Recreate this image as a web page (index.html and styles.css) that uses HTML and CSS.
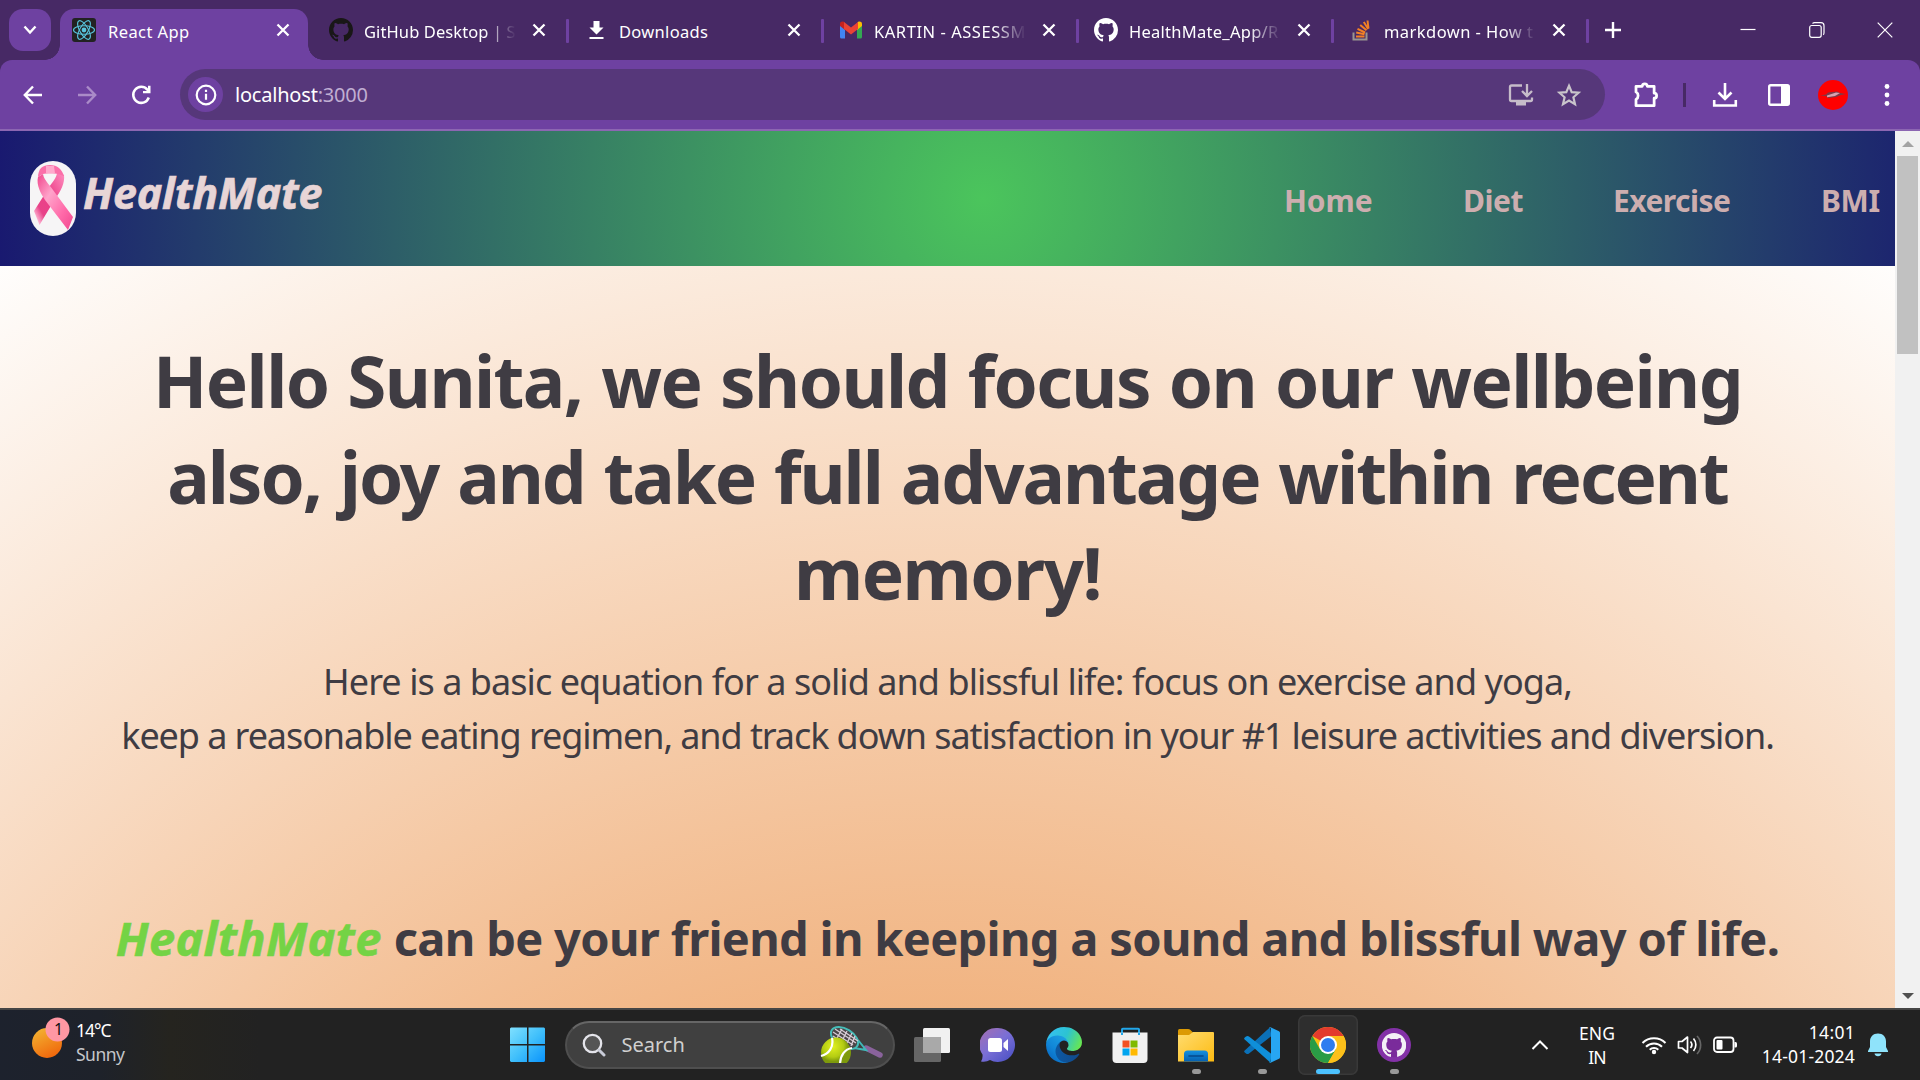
FILE: index.html
```html
<!DOCTYPE html>
<html lang="en">
<head>
<meta charset="utf-8">
<title>React App</title>
<link rel="stylesheet" href="styles.css">
</head>
<body>
<svg class="defs" width="0" height="0" aria-hidden="true">
  <symbol id="x" viewBox="0 0 14 14"><path d="M1.5 1.5l11 11M12.5 1.5l-11 11" stroke="#fff" stroke-width="2.3" fill="none"/></symbol>
  <symbol id="octocat" viewBox="0 0 16 16"><path d="M8 0C3.58 0 0 3.58 0 8c0 3.54 2.29 6.53 5.47 7.59.4.07.55-.17.55-.38 0-.19-.01-.82-.01-1.49-2.01.37-2.53-.49-2.69-.94-.09-.23-.48-.94-.82-1.13-.28-.15-.68-.52-.01-.53.63-.01 1.08.58 1.23.82.72 1.21 1.87.87 2.33.66.07-.52.28-.87.51-1.07-1.78-.2-3.64-.89-3.64-3.95 0-.87.31-1.59.82-2.15-.08-.2-.36-1.02.08-2.12 0 0 .67-.21 2.2.82.64-.18 1.32-.27 2-.27s1.36.09 2 .27c1.53-1.04 2.2-.82 2.2-.82.44 1.1.16 1.92.08 2.12.51.56.82 1.27.82 2.15 0 3.07-1.87 3.75-3.65 3.95.29.25.54.73.54 1.48 0 1.07-.01 1.93-.01 2.2 0 .21.15.46.55.38A8.01 8.01 0 0 0 16 8c0-4.42-3.58-8-8-8z"/></symbol>
</svg>

<header class="tabstrip">
  <button class="tab-search"><svg width="14" height="10" viewBox="0 0 14 10"><path d="M1.5 1.5L7 7.5l5.500-6" fill="none" stroke="#fff" stroke-width="2.4"/></svg></button>
  <div class="tab active">
    <svg class="fav" width="24" height="24" viewBox="0 0 24 24"><rect width="24" height="24" rx="3" fill="#222"/><g fill="none" stroke="#58c4dc" stroke-width="1.1"><ellipse cx="12" cy="12" rx="10.500" ry="4.200"/><ellipse cx="12" cy="12" rx="10.500" ry="4.200" transform="rotate(60 12 12)"/><ellipse cx="12" cy="12" rx="10.500" ry="4.200" transform="rotate(120 12 12)"/></g><circle cx="12" cy="12" r="2.400" fill="#58c4dc"/></svg>
    <span class="title"><span class="t-react">React App</span></span>
    <svg class="close" width="14" height="14"><use href="#x"/></svg>
  </div>
  <div class="tab first">
    <svg class="fav" width="24" height="24" fill="#191717"><use href="#octocat"/></svg>
    <span class="title fade"><span class="t-gh">GitHub Desktop | S</span></span>
    <svg class="close" width="14" height="14"><use href="#x"/></svg>
  </div>
  <div class="tab">
    <svg class="fav" width="24" height="24" viewBox="0 0 24 24"><path d="M9.500 3h6v6.500h4L12.500 16.500 5.500 9.500h4zM5.500 19h14v2h-14z" fill="#fff"/></svg>
    <span class="title"><span class="t-dl">Downloads</span></span>
    <svg class="close" width="14" height="14"><use href="#x"/></svg>
  </div>
  <div class="tab">
    <svg class="fav" width="24" height="24" viewBox="0 0 24 24"><path d="M1 6.500V19a1.500 1.500 0 0 0 1.500 1.500H6V10z" fill="#4285f4"/><path d="M23 6.500V19a1.500 1.500 0 0 1-1.500 1.500H18V10z" fill="#34a853"/><path d="M18 5.500V12l5-4V6c0-2.500-2.700-3-4-2z" fill="#fbbc04"/><path d="M6 5.500V12L1 8V6c0-2.500 2.700-3 4-2z" fill="#c5221f"/><path d="M5 4l7 5.500L19 4v7l-7 5.500L5 11z" fill="#ea4335"/></svg>
    <span class="title fade"><span class="t-mail">KARTIN - ASSESSM</span></span>
    <svg class="close" width="14" height="14"><use href="#x"/></svg>
  </div>
  <div class="tab">
    <svg class="fav" width="24" height="24" fill="#fff"><use href="#octocat"/></svg>
    <span class="title fade"><span class="t-repo">HealthMate_App/R</span></span>
    <svg class="close" width="14" height="14"><use href="#x"/></svg>
  </div>
  <div class="tab">
    <svg class="fav" width="24" height="24" viewBox="0 0 24 24"><path d="M4.500 14.500v7h13v-7" fill="none" stroke="#9a9590" stroke-width="2"/><g stroke="#f48024" stroke-width="2"><path d="M7 18.500h8.500M7.200 14.600l8.300 1.700M8.500 10.800l7.600 3.700M11.200 7l6.300 5.300M14.800 4l4.400 7M18.500 2.500l1 8"/></g></svg>
    <span class="title fade"><span class="t-so">markdown - How t</span></span>
    <svg class="close" width="14" height="14"><use href="#x"/></svg>
  </div>
  <svg class="newtab" width="16" height="16" viewBox="0 0 16 16"><path d="M8 0v16M0 8h16" stroke="#fff" stroke-width="2.400"/></svg>
  <div class="winctl">
    <svg width="16" height="16" viewBox="0 0 16 16"><path d="M.5 7.500h15" stroke="#fff" stroke-width="1.200"/></svg>
    <svg width="16" height="16" viewBox="0 0 16 16"><g fill="none" stroke="#fff" stroke-width="1.200"><rect x=".7" y="3.500" width="11.500" height="11.800" rx="2"/><path d="M3.500 1.500Q4.500.7 5.500.7H12q3 0 3 3v7q0 1.500-.8 2"/></g></svg>
    <svg width="16" height="16" viewBox="0 0 16 16"><path d="M.7.700l14.600 14.600M15.300.700L.7 15.300" stroke="#fff" stroke-width="1.200"/></svg>
  </div>
</header>

<div class="toolbar-wrap">
<div class="toolbar">
  <div class="navbtns">
    <svg width="22" height="22" viewBox="0 0 22 22"><path d="M20 11H3M11 2.500L2.800 11l8.200 8.500" fill="none" stroke="#fff" stroke-width="2.400"/></svg>
    <svg width="22" height="22" viewBox="0 0 22 22"><path d="M2 11h17M11 2.500l8.200 8.500-8.200 8.500" fill="none" stroke="#aa8bc8" stroke-width="2.400"/></svg>
    <svg width="22" height="22" viewBox="0 0 22 22"><path d="M18.800 13.500A8 8 0 1 1 17.300 5.600L19 7.800" fill="none" stroke="#fff" stroke-width="2.500"/><path d="M20.500 1.800v7.500H13V7h5V1.800z" fill="#fff"/></svg>
  </div>
  <div class="omnibox">
    <span class="info"><svg width="22" height="22" viewBox="0 0 22 22"><circle cx="11" cy="11" r="9.300" fill="none" stroke="#fff" stroke-width="2.200"/><path d="M11 9.800v6M11 5.800v2.300" stroke="#fff" stroke-width="2.200"/></svg></span>
    <span class="url">localhost<i>:3000</i></span>
    <svg class="install" width="26" height="24" viewBox="0 0 26 24"><path d="M14 2.500H3.500q-1.500 0-1.500 1.500v12.500q0 1.500 1.500 1.500h19q1.500 0 1.500-1.500V14.500M19 1v11M14 8l5 5 5-5" fill="none" stroke="#c6bcc9" stroke-width="2.300"/><path d="M8 18h10v4.500H8z" fill="#c6bcc9"/></svg>
    <svg width="26" height="26" viewBox="0 0 26 26"><path d="M13 3.800l2.700 6.300 6.900.6-5.200 4.600 1.600 6.800-6-3.600-6 3.600 1.600-6.800-5.200-4.600 6.900-.6z" fill="none" stroke="#c9c4cb" stroke-width="2.200"/></svg>
  </div>
  <div class="tools">
    <svg width="30" height="30" viewBox="0 0 24 24"><path d="M4 5H9a2 2 0 0 1 4 0H18.500V10.500a2 2 0 0 1 0 4V20.500H4V15.500a3.500 3.500 0 0 0 0-6Z" fill="none" stroke="#fff" stroke-width="2.200" stroke-linejoin="round"/></svg>
    <span class="tsep"></span>
    <svg class="dl" width="26" height="26" viewBox="0 0 26 26"><path d="M13 1v15M6.500 10.500L13 17l6.500-6.500M2.200 18v5.500h21.600V18" fill="none" stroke="#fff" stroke-width="2.600"/></svg>
    <svg class="panel" width="24" height="24" viewBox="0 0 24 24"><rect x="2.200" y="2.200" width="19.600" height="19.600" rx="1.500" fill="none" stroke="#fff" stroke-width="2.400"/><path d="M14 2h8v20h-8z" fill="#fff"/></svg>
    <svg class="avatar" width="30" height="30" viewBox="0 0 30 30"><circle cx="15" cy="15" r="15" fill="#fe0000"/><path d="M2 15.500l6-1 2-2 9-1 3 1.500 6 1-5 1-5 2-8 1-2-2z" fill="#7c3a48"/><path d="M9 15.500l9-3 4 .5-5 3-8 1.200z" fill="#d9a0ae"/></svg>
    <svg class="more" width="6" height="26" viewBox="0 0 6 26"><g fill="#fff"><circle cx="3" cy="4.500" r="2.400"/><circle cx="3" cy="13" r="2.400"/><circle cx="3" cy="21.500" r="2.400"/></g></svg>
  </div>
</div>
</div>

<div class="viewport">
  <div class="page">
    <nav class="nav">
      <svg class="ribbon" width="46" height="75" viewBox="0 0 46 75">
        <defs>
          <linearGradient id="pk" x1="0" y1="0" x2="1" y2="1"><stop offset="0" stop-color="#f0468c"/><stop offset=".35" stop-color="#ffa3ca"/><stop offset=".7" stop-color="#ff6aa9"/><stop offset="1" stop-color="#f1478f"/></linearGradient>
          <linearGradient id="pk2" x1="1" y1="0" x2="0" y2="1"><stop offset="0" stop-color="#ff8fc0"/><stop offset=".45" stop-color="#ec3f88"/><stop offset=".75" stop-color="#e84389"/><stop offset=".9" stop-color="#ffb5d4"/><stop offset="1" stop-color="#f0559a"/></linearGradient>
        </defs>
        <rect width="46" height="75" rx="23" fill="#f6f5f6"/>
        <path d="M27 11l7 3c1 8-3 16-9 24L9.500 64 4 50 18 28C22 21 27 17 27 11z" fill="url(#pk2)"/>
        <path d="M13 13L8 16c-2 8 3 17 7 23L38 69l5-13-20-27c-4-6-9-10-10-16z" fill="url(#pk)"/>
        <path d="M11 7c4-4 14-4 18 0 3 3 4 5 5 8l-6-2c-4-1-11-1-15 0l-5 3c0-3 1-7 3-9z" fill="#fb6fa9"/>
        <path d="M16 5h8l1 7.500h-9z" fill="#ffa9cc"/>
      </svg>
      <span class="brand">HealthMate</span>
      <ul class="links">
        <li class="home">Home</li><li class="diet">Diet</li><li class="exercise">Exercise</li><li class="bmi">BMI</li>
      </ul>
    </nav>
    <main class="hero">
      <h1><span class="h1a">Hello Sunita, we should focus on our wellbeing</span><span class="h1b">also, joy and take full advantage within recent</span><span class="h1c">memory!</span></h1>
      <p><span class="pa">Here is a basic equation for a solid and blissful life: focus on exercise and yoga,</span><span class="pb">keep a reasonable eating regimen, and track down satisfaction in your #1 leisure activities and diversion.</span></p>
      <h2><em>HealthMate</em> <span class="tagline">can be your friend in keeping a sound and blissful way of life.</span></h2>
    </main>
  </div>
  <div class="scrollbar"><i class="up"></i><i class="thumb"></i><i class="down"></i></div>
</div>

<footer class="taskbar">
  <div class="weather">
    <svg width="40" height="44" viewBox="0 0 40 44"><defs><linearGradient id="sun" x1=".2" y1="0" x2=".7" y2="1"><stop offset="0" stop-color="#f3b331"/><stop offset="1" stop-color="#f0650b"/></linearGradient></defs><circle cx="16" cy="28" r="15" fill="url(#sun)"/><circle cx="26.500" cy="14.500" r="12" fill="#ff97a3"/><text x="27.500" y="20" text-anchor="middle" font-size="16" fill="#111">1</text></svg>
    <div class="wtext"><span class="temp">14°C</span><span class="cond">Sunny</span></div>
  </div>
  <div class="apps">
    <span class="app start"><svg width="36" height="36" viewBox="0 0 36 36"><defs><linearGradient id="win" x1="0" y1="0" x2="1" y2="1"><stop offset="0" stop-color="#7fe0ff"/><stop offset=".5" stop-color="#41c0fb"/><stop offset="1" stop-color="#0a93fb"/></linearGradient></defs><path d="M1 .500h16v16.500H0V1.500zM18.500.500H34l1 1V17H18.500zM0 18.500h17V35H1l-1-1zM18.500 18.500H35V34l-1 1H18.500z" fill="url(#win)"/></svg></span>
    <div class="search">
      <svg width="24" height="24" viewBox="0 0 24 24"><circle cx="10.500" cy="10.500" r="8.700" fill="#555" stroke="#e4e4ea" stroke-width="2.300"/><path d="M17 17l5 5" stroke="#c9ccd8" stroke-width="3" stroke-linecap="round"/></svg>
      <span class="stext">Search</span>
      <svg class="tennis" width="64" height="40" viewBox="0 0 64 40"><defs><radialGradient id="ball" cx=".4" cy=".3"><stop offset="0" stop-color="#e0f020"/><stop offset=".7" stop-color="#b4cc12"/><stop offset="1" stop-color="#7e9a0c"/></radialGradient><clipPath id="bc"><path d="M0 0h64v38H0z"/></clipPath></defs>
        <g clip-path="url(#bc)"><path d="M46 23l14 7" stroke="#8a639c" stroke-width="5.500" stroke-linecap="round"/><path d="M34 23l12 2-8-10" fill="none" stroke="#3fb8b8" stroke-width="2"/><ellipse cx="24.500" cy="13" rx="15" ry="9" transform="rotate(32 24.500 13)" fill="#4a4648" stroke="#45bcb8" stroke-width="2"/><path d="M13 7l20 13M15 4l21 14M20 4l18 12M13 11l16 11M16 15l6-11M21 18l6-12M26 20l6-12M31 21l4-10" stroke="#d8ccd6" stroke-width="1.300"/><circle cx="16" cy="27.500" r="15" fill="url(#ball)"/><path d="M12 13c2 9-3 16-11 18M32 23c-7 1-12 7-12 17" fill="none" stroke="#fff" stroke-width="2.200"/></g></svg>
    </div>
    <span class="app view"><svg width="36" height="34" viewBox="0 0 36 34"><rect x="9" width="27" height="25" rx="1.500" fill="#f1f1f1"/><rect y="9" width="27" height="25" rx="1.500" fill="#666"/><path d="M9 9h18v16H9z" fill="#a9a9a9"/></svg></span>
    <span class="app"><svg width="36" height="36" viewBox="0 0 36 36"><defs><linearGradient id="chat" x1="0" y1="0" x2=".9" y2="1"><stop offset="0" stop-color="#a66fb0"/><stop offset=".5" stop-color="#7a6fd6"/><stop offset="1" stop-color="#4a50c4"/></linearGradient></defs><path d="M18 1a17 17 0 1 1-8 32q-4 2.500-9 1.500 2-3 1.500-7A17 17 0 0 1 18 1z" fill="url(#chat)"/><rect x="8" y="11" width="14" height="14" rx="2.500" fill="#fff"/><path d="M23.500 16l4.500-4v12l-4.500-4z" fill="#fff"/></svg></span>
    <span class="app"><svg width="36" height="36" viewBox="0 0 256 256"><defs><linearGradient id="e1" x1="0" y1=".5" x2="1" y2=".5"><stop offset="0" stop-color="#0c59a4"/><stop offset="1" stop-color="#114a8b"/></linearGradient><linearGradient id="e2" x1=".8" y1=".2" x2=".2" y2="1"><stop offset="0" stop-color="#1b9de2"/><stop offset=".5" stop-color="#1187d8"/><stop offset="1" stop-color="#0866c0"/></linearGradient><linearGradient id="e3" x1="0" y1=".4" x2="1" y2=".7"><stop offset="0" stop-color="#35c1f1"/><stop offset=".5" stop-color="#2cc3d2"/><stop offset="1" stop-color="#6ae84c"/></linearGradient></defs><g transform="translate(-4.600 -5)"><path fill="url(#e1)" d="M235.700 195.500a93.700 93.700 0 0 1-10.600 4.700 101.900 101.900 0 0 1-35.900 6.400c-47.300 0-88.500-32.500-88.500-74.300a31.500 31.500 0 0 1 16.400-27.300c-42.800 1.800-53.800 46.400-53.800 72.500 0 74 68.100 81.400 82.800 81.400 7.900 0 19.800-2.300 27-4.600l1.300-.4a128.300 128.300 0 0 0 66.600-52.800 4 4 0 0 0-5.300-5.600Z"/><path fill="url(#e2)" d="M110.300 246.300A79.200 79.200 0 0 1 87.600 225a80.700 80.700 0 0 1 29.500-120c3.200-1.500 8.500-4.100 15.600-4a32.400 32.400 0 0 1 25.700 13 31.900 31.900 0 0 1 6.300 18.700c0-.2 24.500-79.600-80-79.600-43.900 0-80 41.600-80 78.200a130.200 130.200 0 0 0 12.100 56 128 128 0 0 0 156.400 67 75.500 75.500 0 0 1-62.800-8Z"/><path fill="url(#e3)" d="M156.900 153.800c-.9 1-3.400 2.500-3.400 5.600 0 2.600 1.700 5.200 4.800 7.300 14.300 10 41.400 8.600 41.500 8.600a59.600 59.600 0 0 0 30.300-8.300 61.400 61.400 0 0 0 30.400-52.900c.3-22.400-8-37.300-11.300-43.900C228 28.800 182.300 5 132.600 5a128 128 0 0 0-128 126.200c.5-36.500 36.800-66 80-66 3.500 0 23.500.3 42 10a72.600 72.600 0 0 1 30.900 29.300c6.100 10.600 7.200 24.100 7.200 29.500s-2.700 13.300-7.800 19.900Z"/></g></svg></span>
    <span class="app"><svg width="36" height="36" viewBox="0 0 36 36"><path d="M10 8V2.500q0-.8.800-.8h15.400q.8 0 .8.800V8" fill="none" stroke="#22a7ea" stroke-width="2"/><path d="M.5 5.500h35V32q0 4-4 4h-27q-4 0-4-4z" fill="#f1f1f1"/><path d="M9 5.500h2V8H9zM26 5.500h2V8h-2z" fill="#22a7ea"/><path d="M10.500 13.500h7v7h-7z" fill="#f25022"/><path d="M18.500 13.500h7v7h-7z" fill="#7fba00"/><path d="M10.500 21.500h7v7h-7z" fill="#00a4ef"/><path d="M18.500 21.500h7v7h-7z" fill="#ffb900"/></svg></span>
    <span class="app run"><svg width="36" height="36" viewBox="0 0 36 36"><defs><linearGradient id="fo" x1="0" y1="0" x2="1" y2="1"><stop offset="0" stop-color="#ffdc70"/><stop offset="1" stop-color="#fdbb12"/></linearGradient><linearGradient id="fb" x1="0" y1="0" x2="0" y2="1"><stop offset="0" stop-color="#1490df"/><stop offset="1" stop-color="#0560b0"/></linearGradient></defs><path d="M0 3.500q0-1.500 1.500-1.500H10q1.500 0 2.500 1l2.500 2.500V12H0z" fill="#dc9a04"/><path d="M0 8h11l4-3h20q1 0 1 1v28.500H0z" fill="url(#fo)"/><path d="M6 34.500V27q0-3.500 3.500-3.500h17Q30 23.500 30 27v7.500z" fill="url(#fb)"/><path d="M11 29h14" stroke="#044a8c" stroke-width="1.600" stroke-linecap="round"/></svg></span>
    <span class="app run"><svg width="36" height="36" viewBox="0 0 36 36"><path d="M.7 23.500L26 .3 27.500 9 5 26.500q-1.500 1-3 0l-1.500-1.300q-.8-.8.200-1.700z" fill="#0b70b7"/><path d="M.7 12.500Q-.3 11.600.5 10.700L2 9.400q1.500-1 3 0L27.500 27l-1 8.700z" fill="#0f8fd9"/><path d="M26.500.200l8.500 4q1 .500 1 1.500v24.600q0 1-1 1.500l-8.500 4q-1 .3-1.500-.5 2 .5 2-1.500V2.200q0-2-2-1.500.5-.8 1.500-.5z" fill="#27a6f2"/></svg></span>
    <span class="app run cur"><svg width="36" height="36" viewBox="0 0 36 36"><circle cx="18" cy="18" r="18" fill="#fbbf12"/><path d="M18 18L2.410 9A18 18 0 0 1 33.590 9H18z" fill="#e33b2e"/><path d="M2.410 9A18 18 0 0 0 18 36l7.800-13.500L18 18l-7.800 4.500z" fill="#2a9c46"/><path d="M18 9h15.590A18 18 0 0 1 18 36l7.800-13.500z" fill="#fcc01a"/><circle cx="18" cy="18" r="9" fill="#fff"/><circle cx="18" cy="18" r="7" fill="#2e7cf0"/></svg></span>
    <span class="app run"><svg width="34" height="34" viewBox="0 0 34 34"><circle cx="17" cy="17" r="17" fill="#8331a7"/><circle cx="17" cy="17" r="12.200" fill="#7a2b9b"/><svg x="4.800" y="5" width="24.500" height="24.500" fill="#f4f1f6"><use href="#octocat"/></svg></svg></span>
  </div>
  <div class="tray">
    <svg class="chev" width="18" height="12" viewBox="0 0 18 12"><path d="M1.500 10L9 2.500l7.500 7.500" fill="none" stroke="#fff" stroke-width="2"/></svg>
    <div class="lang"><span>ENG</span><span class="region">IN</span></div>
    <svg class="wifi" width="26" height="20" viewBox="0 0 26 20"><g fill="none" stroke="#fff" stroke-width="2"><path d="M1.500 8a16.300 16.300 0 0 1 23 0M5 11.700a11.300 11.300 0 0 1 16 0M8.700 14.700a6.200 6.200 0 0 1 8.600 0"/></g><circle cx="13" cy="17" r="2.200" fill="#fff"/></svg>
    <svg class="vol" width="26" height="22" viewBox="0 0 26 22"><g fill="none" stroke="#fff" stroke-width="1.700"><path d="M1.500 7.500v6.500H5l5.500 4.500V3L5 7.500z" stroke-linejoin="round"/><path d="M13.500 7.500a5 5 0 0 1 0 6.500M16.500 4.500a9.500 9.500 0 0 1 0 12.500"/><path d="M20 2a13 13 0 0 1 0 18" stroke="#666"/></g></svg>
    <svg class="bat" width="25" height="18" viewBox="0 0 25 18"><rect x="1" y="1.500" width="19.500" height="14.500" rx="3" fill="none" stroke="#fff" stroke-width="1.800"/><rect x="3.500" y="4" width="6" height="9.500" rx="1" fill="#fff"/><path d="M21.500 6h1q1.500 0 1.500 1.500v2.500q0 1.500-1.500 1.500h-1z" fill="#fff"/></svg>
    <div class="clock"><span class="time">14:01</span><span class="date">14-01-2024</span></div>
    <svg class="bell" width="20" height="24" viewBox="0 0 20 24"><path d="M10 .500c5 0 8 3.500 8 8V14l2 4v1H0v-1l2-4V8.500c0-4.500 3-8 8-8zM6.500 20.500h7q-.5 2.800-3.500 2.800t-3.500-2.800z" fill="#8fe3fb"/></svg>
  </div>
</footer>
</body>
</html>
```
FILE: styles.css
```css
* { box-sizing: border-box; }
body {
  margin: 0;
  width: 1920px;
  height: 1080px;
  overflow: hidden;
  display: flex;
  flex-direction: column;
  font-family: "Noto Sans", "Open Sans", sans-serif;
  color: #fff;
  background: #472965;
}
svg { display: block; flex: none; }
.defs { position: absolute; }

/* Tab strip */
.tabstrip { height: 60px; display: flex; align-items: flex-start; padding: 9px 27px 0 9px; background: #472965; }
.tab-search { width: 42px; height: 42px; border: 0; border-radius: 14px; background: #6e41a1; display: flex; align-items: center; justify-content: center; margin-right: 9px; padding: 0; }
.tab { position: relative; width: 255px; height: 51px; display: flex; align-items: flex-start; padding: 9px 0 0 15px; flex: none; }
.tab:not(.active)::after { content: ""; position: absolute; right: 0; top: 10px; width: 3px; height: 24px; border-radius: 1px; background: #6e41a1; }
.tab.active { width: 248px; padding-left: 12px; background: #6e41a1; border-radius: 14px 14px 0 0; }
.tab.active::before, .tab.active::after { content: ""; position: absolute; bottom: 0; width: 15px; height: 15px; }
.tab.active::before { left: -15px; background: radial-gradient(circle at 0 0, transparent 14.5px, #6e41a1 15px); }
.tab.active::after { right: -15px; background: radial-gradient(circle at 100% 0, transparent 14.5px, #6e41a1 15px); }
.tab.first { margin-left: 6px; }
.title { width: 152px; margin: 0 16px 0 11px; height: 28px; line-height: 27px; font-size: 16.5px; white-space: nowrap; flex: none; }
.active .title { margin-left: 12px; }
.title.fade { -webkit-mask-image: linear-gradient(90deg, #000 120px, transparent 152px); mask-image: linear-gradient(90deg, #000 120px, transparent 152px); }
.t-react { letter-spacing: 0.415px; }
.t-gh { letter-spacing: 0.098px; }
.t-dl { letter-spacing: 0.312px; }
.t-mail { letter-spacing: 0.55px; }
.t-repo { letter-spacing: 0.268px; }
.t-so { letter-spacing: 0.446px; }
.close { margin-top: 5px; }
.newtab { margin: 13px 0 0 16px; }
.winctl { margin-left: auto; display: flex; gap: 52.5px; padding-top: 13px; }

/* Toolbar */
.toolbar-wrap { background: #472965; }
.toolbar { height: 71px; background: #6e41a1; border-radius: 12px 12px 0 0; border-bottom: 2px solid #8c66b2; display: flex; align-items: center; padding: 0 30px 0 22px; }
.navbtns { display: flex; gap: 32px; width: 158px; }
.omnibox { width: 1425px; height: 51px; border-radius: 26px; background: #56377a; display: flex; align-items: center; padding: 0 23px 0 8px; }
.info { width: 35px; height: 35px; border-radius: 50%; background: #6e41a1; display: flex; align-items: center; justify-content: center; margin-right: 12px; }
.url { font-size: 20px; line-height: 28px; letter-spacing: -0.206px; }
.url i { font-style: normal; color: #c0aed2; }
.install { margin-left: auto; margin-right: 22px; }
.tools { flex: 1; display: flex; align-items: center; padding-left: 26px; }
.tsep { width: 3px; height: 24px; background: #472965; margin-left: 22px; }
.dl { margin-left: 26px; }
.panel { margin-left: 29px; }
.avatar { margin-left: 27px; }
.more { margin-left: auto; }

/* Web page */
.viewport { height: 877px; display: flex; overflow: hidden; }
.page { width: 1895px; overflow: hidden; }
.nav { width: 1966px; height: 135px; display: flex; align-items: flex-start; padding: 30px 0 0 30px; background: radial-gradient(circle, #4bc55c 0%, #191970 100%); }
.brand { margin: 0 0 0 7px; font-size: 43px; font-weight: 700; font-style: italic; line-height: 63px; letter-spacing: -0.159px; color: #e8d5d6; -webkit-text-stroke: 0.7px #e8d5d6; width: 1201px; flex: none; }
.links { list-style: none; margin: 0; display: flex; font-size: 30px; font-weight: 700; line-height: 44px; color: #cdaeaf; padding: 18px 0 0; }
.home { width: 179px; letter-spacing: -0.083px; }
.diet { width: 150px; letter-spacing: -0.447px; }
.exercise { width: 208px; letter-spacing: -0.539px; }
.bmi { letter-spacing: -0.37px; }
.hero { height: 3008px; padding-top: 67px; text-align: center; color: #3f3c43; white-space: nowrap; background: radial-gradient(circle 1800px, #e77d26 0%, #fff 100%); }
.hero h1 { margin: 0 0 34px; font-size: 71px; line-height: 96px; }
.hero h1 span, .hero p span { display: block; }
.h1a { letter-spacing: -1.6px; word-spacing: 2px; }
.h1b { letter-spacing: -2.05px; word-spacing: 2.5px; }
.h1c { letter-spacing: -1.5px; }
.hero p { margin: 0 0 143px; font-size: 36px; line-height: 54px; }
.pa { letter-spacing: -0.95px; }
.pb { letter-spacing: -1.08px; }
.hero h2 { margin: 0; font-size: 47px; line-height: 64px; }
.hero em { color: #74d345; letter-spacing: 0.25px; -webkit-text-stroke: 0.6px #74d345; }
.tagline { letter-spacing: -0.69px; }
.scrollbar { width: 25px; background: #f1f1f1; display: flex; flex-direction: column; align-items: center; }
.scrollbar .up { border: 6px solid transparent; border-top: 0; border-bottom: 6px solid #a3a3a3; margin: 10px 0 9px; }
.thumb { width: 21px; height: 198px; background: #c1c1c1; }
.down { border: 6px solid transparent; border-bottom: 0; border-top: 6px solid #505050; margin-top: auto; margin-bottom: 9px; }

/* Taskbar */
.taskbar { height: 72px; border-top: 2px solid #454545; background: linear-gradient(90deg, #1d222d 0, #1e222a 100px, #25241f 170px, #222 260px); display: flex; }
.weather { display: flex; width: 494px; padding: 5px 0 0 31px; }
.wtext { display: flex; flex-direction: column; margin-left: 5px; font-size: 17.5px; line-height: 24px; padding-top: 3px; }
.temp { letter-spacing: -0.97px; }
.cond { color: #c4c6ca; letter-spacing: -0.513px; }
.apps { display: flex; align-items: center; }
.app { position: relative; width: 60px; height: 60px; margin: 0 3px; display: flex; align-items: center; justify-content: center; }
.start { margin: 0 7px 0 4px; }
.start svg, .search, .app svg { margin-top: -1px; }
.search { width: 330px; height: 48px; border-radius: 24px; background: #404040; border: 2px solid #4f4f4f; border-top-color: #666; display: flex; align-items: center; padding: 0 9px 0 15px; margin-right: 4px; }
.stext { margin-left: 15.5px; font-size: 20px; line-height: 30px; color: #d0d0d0; }
.tennis { margin-left: auto; }
.run::after { content: ""; position: absolute; bottom: 1px; left: 26px; width: 9px; height: 5px; border-radius: 3px; background: #999; }
.cur { background: #2e2e2e; border-radius: 7px; box-shadow: inset 0 0 0 1.5px #393939; }
.cur::after { width: 24px; left: 18px; background: #4cc2ff; }
.tray { margin-left: auto; display: flex; align-items: center; font-size: 17.5px; line-height: 24px; padding-right: 32px; }
.lang { display: flex; flex-direction: column; align-items: center; width: 50px; margin: 0 19px 0 23px; }
.region { letter-spacing: -0.9px; }
.vol { margin-left: 10px; }
.bat { margin-left: 10px; }
.clock { display: flex; flex-direction: column; align-items: flex-end; width: 117px; margin: -2px 13px 0 0; }
.time { letter-spacing: 0.3px; }
.date { letter-spacing: 0.184px; }
```
